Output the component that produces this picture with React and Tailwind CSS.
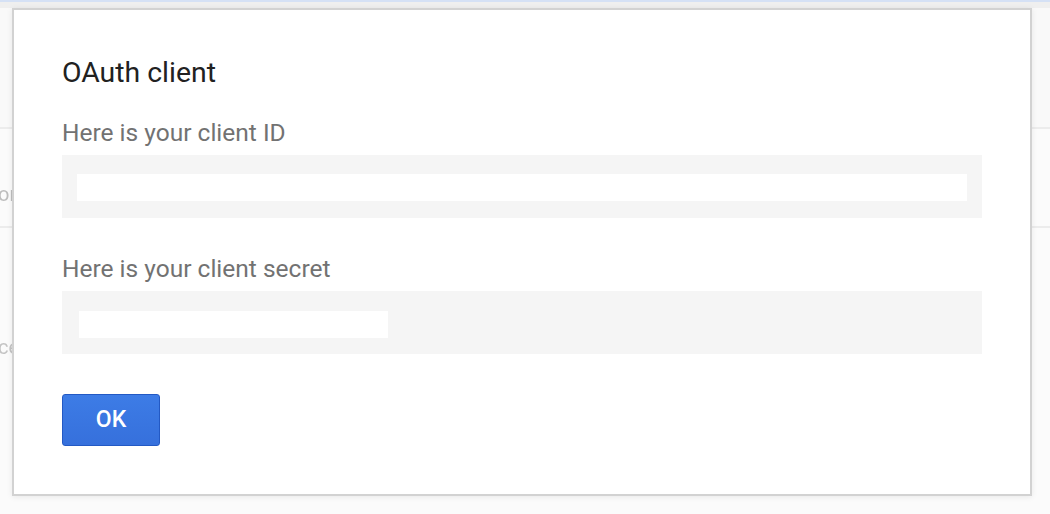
export default function App() {
  return (
    <div className="relative h-[514px] w-[1050px] overflow-hidden bg-[#fbfbfb] font-['Roboto',sans-serif]">
      {/* page behind the dialog */}
      <div className="h-[2px] bg-[#d5e1f5]" />
      <div className="h-[6px] bg-[#efefef]" />
      <div className="h-[119px] bg-[#f9f9f9]" />
      <div className="h-[2px] bg-[#ececec]" />
      <div className="h-[97px] pt-[53px] text-[20px] leading-[24px] text-[#bdbdbd] blur-[0.6px]">
        <span className="-ml-[2px]">or</span>
      </div>
      <div className="h-[2px] bg-[#ececec]" />
      <div className="h-[240px] pt-[107px] text-[20px] leading-[24px] text-[#c4c4c4] blur-[0.6px]">
        <span className="-ml-[2px]">ce</span>
      </div>

      {/* dialog */}
      <div className="absolute left-[12px] top-[8px] h-[488px] w-[1020px] border-2 border-[#d2d2d2] bg-white pl-[48px] pt-[47px] shadow-[0_1px_6px_rgba(0,0,0,0.08)]">
        <h2 className="text-[28.4px] leading-[32px] text-[#212121]">OAuth client</h2>

        <div className="mt-[30px] text-[24.5px] leading-[28px] text-[#727272]">Here is your client ID</div>
        <div className="mt-[8px] h-[63px] w-[920px] bg-[#f5f5f5] px-[15px] pt-[19px]">
          <div className="h-[27px] w-full bg-white" />
        </div>

        <div className="mt-[37px] text-[24.5px] leading-[28px] text-[#727272]">Here is your client secret</div>
        <div className="mt-[8px] h-[63px] w-[920px] bg-[#f5f5f5] px-[17px] pt-[20px]">
          <div className="h-[27px] w-[309px] bg-white" />
        </div>

        <button className="mt-[40px] flex h-[52px] w-[98px] items-center justify-center rounded-[3px] border border-[#2359c4] bg-gradient-to-b from-[#3d7ce6] to-[#3670dc] text-[23px] font-medium text-white">
          OK
        </button>
      </div>
    </div>
  );
}
